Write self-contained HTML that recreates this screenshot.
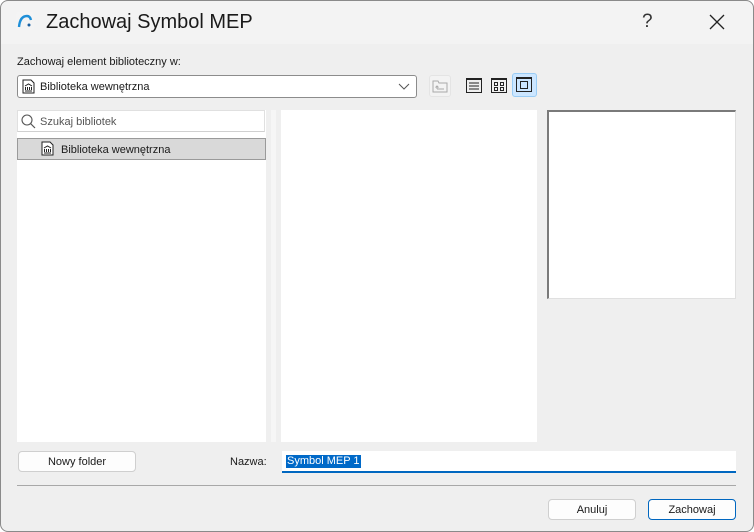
<!DOCTYPE html>
<html><head><meta charset="utf-8"><style>
*{box-sizing:border-box;margin:0;padding:0}
html,body{width:754px;height:532px;overflow:hidden;background:#fff}
body{font-family:"Liberation Sans",sans-serif;font-size:11px;color:#1a1a1a;position:relative}
.win{position:absolute;left:0;top:0;width:754px;height:532px;border-radius:8px;background:#efefef;overflow:hidden}
.frame{position:absolute;left:0;top:0;width:754px;height:532px;border:1px solid #8a8a8a;border-radius:8px;pointer-events:none}
.title{position:absolute;left:0;top:0;width:754px;height:44px;background:#f3f3f3}
.a{position:absolute}
.box{position:absolute;background:#fff}
.btn{position:absolute;background:#fdfdfd;border:1px solid #cfcfcf;border-radius:4px;text-align:center;font-size:11px;line-height:20px}
</style></head><body><div class="win">
<div class="title"></div>
<svg class="a" style="left:16px;top:12px" width="18" height="18" viewBox="0 0 18 18"><rect width="18" height="18" rx="3" fill="#f4f4f4"/><path d="M3 15 Q4 4 11 4 Q14 4 15 8" stroke="#1e8fd8" stroke-width="2.4" fill="none"/><circle cx="13" cy="13" r="1.5" fill="#1a5fa0"/></svg>
<div class="a" style="left:46px;top:11px;font-size:20px;color:#1a1a1a">Zachowaj Symbol MEP</div>
<div class="a" style="left:642px;top:11px;font-size:19px;color:#333">?</div>
<svg class="a" style="left:709px;top:14px" width="16" height="16"><path d="M1 1L15 15M15 1L1 15" stroke="#222" stroke-width="1.3"/></svg>
<div class="a" style="left:17px;top:56px">Zachowaj element biblioteczny w:</div>
<div class="box" style="left:17px;top:75px;width:400px;height:23px;border:1px solid #8c8c8c;border-radius:3px"></div>
<svg class="a" style="left:22px;top:79px" width="13" height="15"><path d="M1 1H9L12 4V14H1Z" fill="#fff" stroke="#222"/><path d="M3 7L6.5 5L10 7M3.5 8V11M5.5 8V11M7.5 8V11M9.5 8V11M3 12H10" stroke="#222" fill="none"/></svg>
<div class="a" style="left:40px;top:81px">Biblioteka wewnętrzna</div>
<svg class="a" style="left:398px;top:83px" width="12" height="7"><path d="M1 1L6 6L11 1" stroke="#555" fill="none"/></svg>
<div class="a" style="left:429px;top:75px;width:22px;height:22px;border:1px solid #e4e4e4;border-radius:3px;background:#f3f3f3"></div>
<svg class="a" style="left:432px;top:79px" width="16" height="14"><path d="M1 2H6L7 4H15V13H1Z" fill="none" stroke="#aaa"/><path d="M5 10H12M5 10V7M3.5 8.5L5 7L6.5 8.5" stroke="#aaa" fill="none"/></svg>
<svg class="a" style="left:466px;top:78px" width="16" height="15"><rect x=".5" y=".5" width="15" height="14" fill="none" stroke="#222"/><path d="M0 1.5H16M3 5H13M3 8H13M3 11H13" stroke="#222"/></svg>
<svg class="a" style="left:491px;top:78px" width="16" height="15"><rect x=".5" y=".5" width="15" height="14" fill="none" stroke="#222"/><path d="M0 1.5H16" stroke="#222"/><rect x="3.5" y="4.5" width="3" height="3" fill="none" stroke="#222"/><rect x="9.5" y="4.5" width="3" height="3" fill="none" stroke="#222"/><rect x="3.5" y="9.5" width="3" height="3" fill="none" stroke="#222"/><rect x="9.5" y="9.5" width="3" height="3" fill="none" stroke="#222"/></svg>
<div class="a" style="left:512px;top:73px;width:25px;height:24px;background:#cce6ff;border:1px solid #99ccf5;border-radius:3px"></div>
<svg class="a" style="left:516px;top:77px" width="16" height="15"><rect x=".5" y=".5" width="15" height="14" fill="none" stroke="#222"/><path d="M0 1.5H16" stroke="#222"/><rect x="4.5" y="4.5" width="7" height="7" fill="none" stroke="#222"/></svg>
<div class="box" style="left:17px;top:110px;width:249px;height:332px"></div>
<div class="box" style="left:17px;top:110px;width:248px;height:22px;border:1px solid #e0e0e0;border-bottom-color:#d0d0d0"></div>
<svg class="a" style="left:21px;top:114px" width="15" height="15"><circle cx="6" cy="6" r="5" fill="none" stroke="#555" stroke-width="1.1"/><path d="M9.5 9.5L14 14" stroke="#555" stroke-width="1.2"/></svg>
<div class="a" style="left:40px;top:116px;color:#555">Szukaj bibliotek</div>
<div class="a" style="left:17px;top:138px;width:249px;height:22px;background:#d9d9d9;border:1px solid #9a9a9a"></div>
<svg class="a" style="left:41px;top:141px" width="13" height="15"><path d="M1 1H9L12 4V14H1Z" fill="#fff" stroke="#222"/><path d="M3 7L6.5 5L10 7M3.5 8V11M5.5 8V11M7.5 8V11M9.5 8V11M3 12H10" stroke="#222" fill="none"/></svg>
<div class="a" style="left:61px;top:144px">Biblioteka wewnętrzna</div>
<div class="a" style="left:271px;top:110px;width:5px;height:332px;background:#f6f6f6"></div>
<div class="box" style="left:281px;top:110px;width:256px;height:332px"></div>
<div class="box" style="left:547px;top:110px;width:189px;height:189px;border:1px solid #e0e0e0;border-top:2px solid #7a7a7a;border-left:2px solid #7a7a7a"></div>
<div class="btn" style="left:18px;top:451px;width:118px;height:21px">Nowy folder</div>
<div class="a" style="left:230px;top:456px">Nazwa:</div>
<div class="box" style="left:282px;top:451px;width:454px;height:22px;border-bottom:2px solid #0067c0"></div>
<div class="a" style="left:286px;top:455px;background:#0069c8;color:#fff;line-height:13px;padding:0 1px">Symbol MEP 1</div>
<div class="a" style="left:17px;top:485px;width:719px;height:1px;background:#a8a8a8"></div>
<div class="btn" style="left:548px;top:499px;width:88px;height:21px">Anuluj</div>
<div class="btn" style="left:648px;top:499px;width:88px;height:21px;border-color:#0067c0">Zachowaj</div>
</div><div class="frame"></div></body></html>
